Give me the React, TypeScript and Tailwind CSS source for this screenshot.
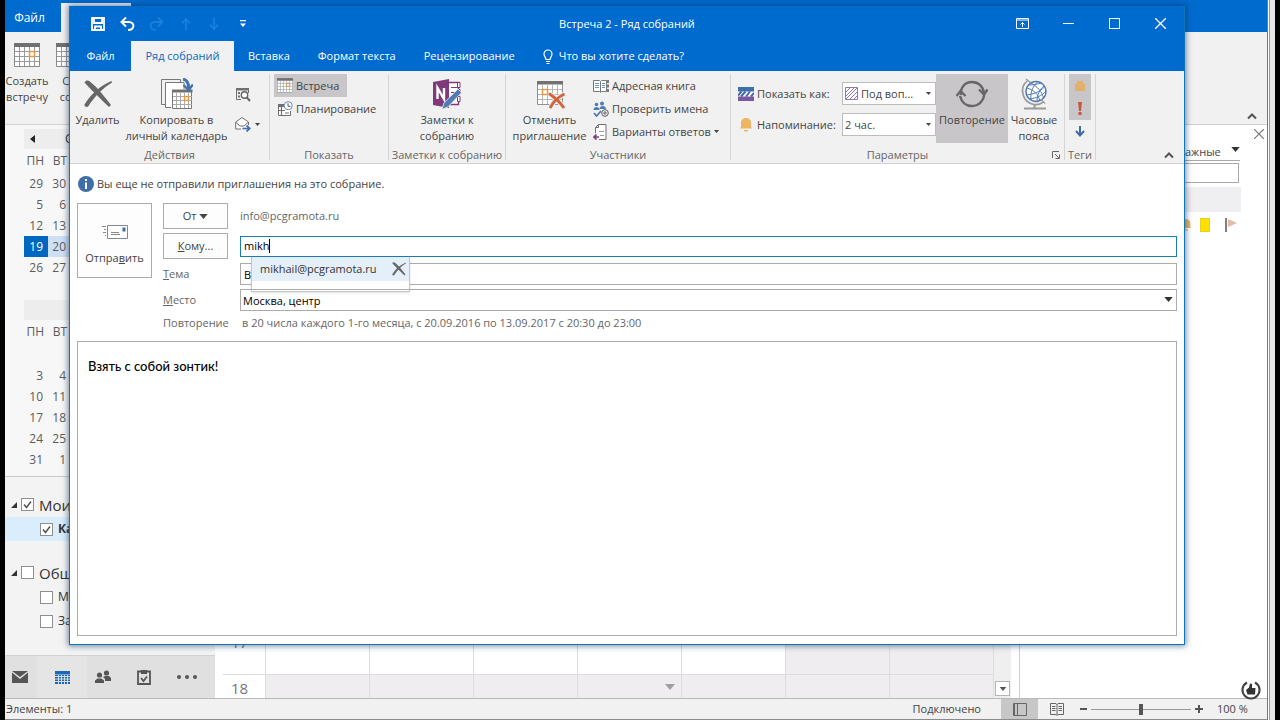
import type { ReactNode } from 'react'

interface MonthGridProps {
  title: string
  hasPrev?: boolean
  weeks: string[][]
}

const FIRST_MONTH = [['29', '30'], ['5', '6'], ['12', '13'], ['19', '20'], ['26', '27']]
const SECOND_MONTH = [['', ''], ['3', '4'], ['10', '11'], ['17', '18'], ['24', '25'], ['31', '1']]
const TABS = ['Вставка', 'Формат текста', 'Рецензирование']

/* ── Icons ───────────────────────── */

function CalendarIcon({ className = 'w-6 h-6' }: { className?: string }) {
  return (
    <svg viewBox="0 0 26 24" className={className} fill="none" aria-hidden="true">
      <path d="M0.5 3.5h25v20h-25z" fill="#fff" stroke="#8a8a8a" />
      <path d="M0 0h26v4H0z" fill="#717171" />
      <path d="M5.5 4v19M10.5 4v19M15.5 4v19M20.5 4v19M1 8.5h24M1 13.5h24M1 18.5h24" stroke="#9a9a9a" />
      <path d="M15.5 8.5h5v5h-5z" stroke="#e39b4a" strokeWidth="1.5" />
    </svg>
  )
}

function DeleteIcon({ className = 'w-8 h-8' }: { className?: string }) {
  return (
    <svg viewBox="0 0 32 32" className={className} fill="#666" aria-hidden="true">
      <path d="M2.5 4.5C4 1.5 7 2 9 4.5C16 10 22 18 29 27L27 29C19 21 11 14 2.5 4.5Z" />
      <path d="M29.5 3L30 4.5C21 10 13 18 6.5 28C5 30 2 28.500 2.500 26.500C9 16 18 8 29.500 3Z" />
    </svg>
  )
}

function CopyCalendarIcon() {
  return (
    <svg viewBox="0 0 32 32" className="w-8 h-8" fill="none" aria-hidden="true">
      <path d="M4 26.500H.5V1.500H19.500V4" stroke="#777" />
      <path d="M10 29.500H4.500V4.500H23V11" fill="#fff" stroke="#777" />
      <path d="M11.500 13.500h19v17h-19z" fill="#fff" stroke="#777" />
      <path d="M11 11.500h20.500v3H11z" fill="#717171" />
      <path d="M15.500 15v15M19.500 15v15M23.500 15v15M27.500 15v15M12 18.500h19M12 22.500h19M12 26.500h19" stroke="#aaa" />
      <path d="M23.500 18.500h4v4h-4z" stroke="#e39b4a" strokeWidth="1.500" />
      <path d="M22 1C26 2 28 5 27.500 11" stroke="#4472b0" strokeWidth="3" />
      <path d="M22.500 7l5 5L32 6.500" stroke="#4472b0" strokeWidth="2.400" />
    </svg>
  )
}

function CalendarSearchIcon() {
  return (
    <svg viewBox="0 0 16 16" className="w-4 h-4" fill="none" aria-hidden="true">
      <path d="M6 13.500H1.500V2.500h12V7" stroke="#707070" />
      <path d="M1 2h13v2.500H1zM3 6h2v2H3zM3 9.500h2v2H3z" fill="#707070" />
      <circle cx="9.500" cy="9" r="3.200" fill="#fff" stroke="#666" strokeWidth="1.400" />
      <path d="M11.800 11.300L15 15" stroke="#666" strokeWidth="2" />
    </svg>
  )
}

function ForwardIcon() {
  return (
    <svg viewBox="0 0 16 16" className="w-4 h-4" fill="none" aria-hidden="true">
      <path d="M6 13H.7V6L7 1.500 13.500 6v3" fill="#fff" stroke="#707070" />
      <path d="M1 6.500l4 3.500h4l4-3.500" stroke="#707070" />
      <path d="M7.500 12.500h6M11.500 9.500l3.300 3-3.300 3" stroke="#3f70b5" strokeWidth="1.700" />
    </svg>
  )
}

function PlanningIcon() {
  return (
    <svg viewBox="0 0 16 16" className="w-4 h-4" fill="none" aria-hidden="true">
      <path d="M7 4.500H1.500v10h12V10" fill="#fff" stroke="#707070" />
      <path d="M1 3h6v3H1z" fill="#707070" />
      <path d="M1 9.500h7M4.500 6v8M8 12h4" stroke="#707070" strokeWidth="1.200" />
      <circle cx="11.200" cy="4.700" r="4" fill="#fff" stroke="#6e87b8" />
      <path d="M11 2.300v3h2.500" stroke="#555" />
    </svg>
  )
}

function OneNoteIcon() {
  return (
    <svg viewBox="0 0 32 32" className="w-8 h-8" fill="none" aria-hidden="true">
      <path d="M17 4.500h10.500v22H17" fill="#fff" stroke="#80397b" strokeWidth="1.400" />
      <path d="M20 9.500h8M20 14.500h8M20 19.500h8" stroke="#80397b" />
      <path d="M26.500 4.500h2.500v5h-2.500zM26.500 11.500h2.500v5h-2.500zM26.500 18.500h2.500v5h-2.500z" fill="#fff" stroke="#80397b" />
      <path d="M2 4L18 1v29L2 27z" fill="#80397b" />
      <path d="M6.500 21V10l6.500 11V10" stroke="#fff" strokeWidth="2.400" />
      <path d="M11 31.500l1.800-6.500L27 11l3.500 3.500L17.500 28.500z" fill="#4f7cb5" stroke="#f0f0f0" strokeWidth=".8" />
    </svg>
  )
}

function CancelInviteIcon() {
  return (
    <svg viewBox="0 0 32 32" className="w-8 h-8" fill="none" aria-hidden="true">
      <path d="M3.500 4.500h25v22h-25z" fill="#fff" stroke="#909090" />
      <path d="M3 3h26v3.500H3z" fill="#717171" />
      <path d="M8.500 6v20M13.500 6v20M18.500 6v20M23.500 6v20M4 11.500h24M4 16.500h24M4 21.500h24" stroke="#b5b5b5" />
      <path d="M8.500 11.500h5v5h-5z" stroke="#e39b4a" strokeWidth="1.500" />
      <path d="M15 15.500C20 19 26 24 30 30M30.500 16C24 19 19 24 16 30" stroke="#f0f0f0" strokeWidth="5" />
      <path d="M15 15.500C20 19 26 24 30 30M30.500 16C24 19 19 24 16 30" stroke="#d5623a" strokeWidth="2.800" />
    </svg>
  )
}

function AddressBookIcon() {
  return (
    <svg viewBox="0 0 16 16" className="w-4 h-4" fill="none" aria-hidden="true">
      <path d="M.5 2.500h6l1 1 1-1h5v11h-5l-1 1-1-1h-6zM7.500 3.500V14" fill="#fff" stroke="#777" />
      <path d="M2 5.500h4M2 7.500h4M2 9.500h4M9 5.500h3M9 7.500h3M9 9.500h3" stroke="#6c94c4" />
      <path d="M15 2v3M15 6.500v3M15 11v3" stroke="#555" strokeWidth="1.500" />
    </svg>
  )
}

function CheckNamesIcon() {
  return (
    <svg viewBox="0 0 16 16" className="w-4 h-4" fill="none" aria-hidden="true">
      <circle cx="3.500" cy="3.500" r="1.800" fill="#4f7cb5" />
      <circle cx="9" cy="2.500" r="2" fill="#4f7cb5" />
      <path d="M.5 9c0-4 6-4 6 0zM6.500 8c0-4 6.500-4 6.500 0z" fill="#4f7cb5" />
      <path d="M1 12l2.500 3L8 10" stroke="#4f7cb5" strokeWidth="1.800" />
      <circle cx="12" cy="12" r="3.300" fill="#fff" stroke="#555" />
      <circle cx="12" cy="12" r="1.200" stroke="#555" />
    </svg>
  )
}

function ResponseIcon() {
  return (
    <svg viewBox="0 0 16 16" className="w-4 h-4" fill="none" aria-hidden="true">
      <path d="M2.500 9V3.500L5.500.5h7.500v15H6M2.500 3.500h3v-3" fill="#fff" stroke="#707070" />
      <path d="M6 7.500h5M7 11.500h4" stroke="#999" />
      <path d="M6 13H1M3.500 10.500L1 13l2.500 2.500" stroke="#80397b" strokeWidth="1.600" />
    </svg>
  )
}

function ShowAsIcon() {
  return (
    <svg viewBox="0 0 16 16" className="w-4 h-4" aria-hidden="true">
      <path d="M0 1h16v5H0z" fill="#3f6ea8" />
      <path d="M0 10h16v5H0z" fill="#7b57a0" />
      <path d="M0 5.500h16v5H0z" fill="#fff" />
      <path d="M0 9.500L3.500 5.500M3 10.500L7.500 5.500M8 10.500L12 5.500M13 10.500L16 7" stroke="#4668a8" strokeWidth="2" />
    </svg>
  )
}

function BellIcon({ className = 'w-4 h-4' }: { className?: string }) {
  return (
    <svg viewBox="0 0 16 16" className={className} fill="#edb562" aria-hidden="true">
      <path d="M8 1c3.500 0 5 2.500 5 5v4l1 1.500H2L3 10V6c0-2.500 1.500-5 5-5zM6 13h4v1.500H6z" />
    </svg>
  )
}

function RecurrenceIcon() {
  return (
    <svg viewBox="0 0 32 32" className="w-8 h-8" fill="none" stroke="#666" strokeWidth="2.400" aria-hidden="true">
      <path d="M5 17C4 9.500 9 4 16 4c6 0 11 4 12 11" />
      <path d="M28 14c1 8-5 14-12 14-6 0-10.500-4-12-10" />
      <path d="M23 11.500l5 5 3.500-5M.5 18L4.500 13l5 5" />
    </svg>
  )
}

function GlobeIcon() {
  return (
    <svg viewBox="0 0 32 32" className="w-8 h-8" fill="none" aria-hidden="true">
      <circle cx="18" cy="13.500" r="10" fill="#fff" stroke="#4f7cb5" strokeWidth="1.400" />
      <path d="M13 5c7 4 11 9 12.500 15M9 10c7 2 11 6 13 13M8.500 17c7-1 13-3 18-8M11.500 21c7-1 12-3 16.500-8M11 7c5 0 9-1 12-2M20 3.500c-5 4-8 11-7 18M26 8c-4 3-7 9-7 15" stroke="#4f7cb5" />
      <path d="M9 3C1 10 4 24 16 26.500c4 .5 7-.5 9-2.500" stroke="#999" strokeWidth="1.600" />
      <path d="M8 1l5 4M23 21.500l4 4" stroke="#999" strokeWidth="1.400" />
      <path d="M16.500 26.500v4M6 30.500h22" stroke="#999" strokeWidth="2" />
    </svg>
  )
}

function SendIcon() {
  return (
    <svg viewBox="0 0 28 16" className="w-7 h-4" fill="none" aria-hidden="true">
      <path d="M6.500 1.500h20v13h-20z" fill="#fff" stroke="#7c8a9c" />
      <path d="M21.500 3.500h3v4h-3z" fill="#3f6ea8" />
      <path d="M10 8.500h8M10 10.500h9M1 2.500h4M3 5.500h2M2 8.500h3M4 11.500h1" stroke="#888" />
    </svg>
  )
}

function Caret({ className }: { className: string }) {
  return (
    <svg viewBox="0 0 10 6" className={className} fill="currentColor" aria-hidden="true">
      <path d="M0 0h10L5 6z" />
    </svg>
  )
}

function ChevronUp() {
  return (
    <svg viewBox="0 0 10 8" className="w-[10px] h-2" fill="none" stroke="#555" strokeWidth="2" aria-hidden="true">
      <path d="M1 6.500l4-4 4 4" />
    </svg>
  )
}

/* ── Outlook main window ───────────────────────── */

function MonthGrid({ title, hasPrev, weeks }: MonthGridProps) {
  return (
    <div className="pl-[19px] text-xs text-[#5c5c5c]">
      <div className="h-5 bg-[#ededee] flex items-center pl-[6px] text-[#333]">
        {hasPrev && (
          <button type="button" aria-label="Назад">
            <svg viewBox="0 0 5 8" className="w-[5px] h-2" fill="#222"><path d="M5 0v8L0 4z" /></svg>
          </button>
        )}
        <span className="ml-[30px]">{title}</span>
      </div>
      <table className="table-fixed w-[47px] border-collapse text-right">
        <thead>
          <tr className="h-6">
            <th className="w-6 p-0 pr-1 font-normal">ПН</th>
            <th className="w-[23px] p-0 pr-1 font-normal">ВТ</th>
          </tr>
        </thead>
        <tbody>
          {weeks.map((week, i) => (
            <tr key={i} className="h-[21px]">
              {week.map((day, j) => (
                <td
                  key={j}
                  className={
                    day === '19'
                      ? 'p-0 pr-[5px] bg-[#0067c0] text-white'
                      : day === '20'
                        ? 'p-0 pr-[5px] bg-[#cfe0f5]'
                        : 'p-0 pr-[5px]'
                  }
                >
                  {day}
                </td>
              ))}
            </tr>
          ))}
        </tbody>
      </table>
    </div>
  )
}

function Tick({ checked, label, className }: { checked?: boolean; label: string; className: string }) {
  return (
    <label className={className}>
      <span className="relative w-[13px] h-[13px] shrink-0">
        <input
          type="checkbox"
          defaultChecked={checked}
          className="peer block appearance-none w-[13px] h-[13px] border border-[#8f8f8f] bg-white"
        />
        <svg viewBox="0 0 13 13" className="absolute inset-0 hidden peer-checked:block" fill="none" stroke="#555" strokeWidth="1.500">
          <path d="M3 6.500l2.500 3L10 3.500" />
        </svg>
      </span>
      {label}
    </label>
  )
}

function Disclosure() {
  return <svg viewBox="0 0 6 6" className="w-[6px] h-[6px] shrink-0" fill="#333"><path d="M6 0v6H0z" /></svg>
}

function Sidebar() {
  return (
    <aside className="w-[210px] shrink-0 flex flex-col bg-[#f3f3f3] overflow-hidden">
      <div className="pt-1 bg-[#f7f7f7] flex flex-col gap-[22px] h-[352px] border-b border-[#c9c9c9] shrink-0">
        <MonthGrid title="С" hasPrev weeks={FIRST_MONTH} />
        <MonthGrid title="" weeks={SECOND_MONTH} />
      </div>
      <div className="flex-1 pt-4 text-xs text-[#333]">
        <div className="h-6 flex items-center gap-1 pl-[6px]">
          <Disclosure />
          <Tick checked label="Мои" className="flex items-center gap-[5px] text-[15px]" />
        </div>
        <Tick checked label="Ка" className="h-6 flex items-center gap-[5px] pl-[35px] bg-[#d9edfd] font-bold" />
        <div className="mt-5 h-6 flex items-center gap-1 pl-[6px]">
          <Disclosure />
          <Tick label="Общ" className="flex items-center gap-[5px] text-[15px]" />
        </div>
        <Tick label="М" className="h-6 flex items-center gap-[5px] pl-[35px]" />
        <Tick label="За" className="h-6 flex items-center gap-[5px] pl-[35px]" />
      </div>
      <nav className="h-[43px] shrink-0 bg-[#e1e0e1] border-t border-[#d2d2d2] flex items-center text-[#555]">
        <button type="button" aria-label="Почта" className="w-8 flex pl-[7px]">
          <svg viewBox="0 0 16 12" className="w-4 h-3" fill="#555"><path d="M0 0h16L8 6zM0 1.500L8 8l8-6.500V12H0z" /></svg>
        </button>
        <button type="button" aria-label="Календарь" className="w-[50px] h-full bg-[#e6e5e6] flex items-center justify-center">
          <svg viewBox="0 0 15 13" className="w-[15px] h-[13px]" fill="#1d68b5">
            <path d="M0 0h15v3H0z" />
            <path d="M0 3.500h15V13H0z" />
            <path d="M0 5.500h15M0 8h15M0 10.500h15M3.500 4v9M6.500 4v9M9.500 4v9M12.500 4v9" stroke="#e6e5e6" strokeWidth=".9" />
          </svg>
        </button>
        <button type="button" aria-label="Люди" className="w-8 flex justify-center">
          <svg viewBox="0 0 16 14" className="w-4 h-[14px]" fill="#555">
            <circle cx="4.500" cy="5" r="2.600" />
            <circle cx="11.500" cy="3" r="2.600" />
            <path d="M0 13V10.500L2.500 8.500h4L9 10.500V13zM10 11V9L8 7l2-1h4l2 2v3z" />
          </svg>
        </button>
        <button type="button" aria-label="Задачи" className="w-[50px] flex justify-center">
          <svg viewBox="0 0 14 16" className="w-[14px] h-4" fill="none" stroke="#555" strokeWidth="1.800">
            <path d="M4 2.500H1V15h12V2.500h-3" />
            <path d="M4 1h6v4H4z" fill="#555" stroke="none" />
            <path d="M4 9l2.500 3L10 7.500" />
          </svg>
        </button>
        <button type="button" aria-label="Еще" className="w-9 flex justify-center">
          <svg viewBox="0 0 20 4" className="w-5 h-1" fill="#555"><circle cx="2" cy="2" r="2" /><circle cx="10" cy="2" r="2" /><circle cx="18" cy="2" r="2" /></svg>
        </button>
      </nav>
    </aside>
  )
}

function CalendarGrid() {
  return (
    <main className="flex-1 bg-white flex flex-col justify-end pl-2">
      <div className="flex">
        <div className="flex-1">
          {['17', '18'].map((hour) => (
            <div key={hour} className={hour === '17' ? 'h-[46px] flex border-b border-[#dcdcdc]' : 'h-[23px] flex'}>
              <span className="w-[43px] shrink-0 border-r border-[#dcdcdc] pl-2 text-[15px] leading-[26px] text-[#777]">{hour}</span>
              <div className="flex-1 grid grid-cols-7">
                {[0, 1, 2, 3, 4, 5, 6].map((day) => (
                  <div
                    key={day}
                    className={
                      hour === '17' && day < 5
                        ? 'border-r border-[#dcdcdc]'
                        : 'flex items-center justify-end border-r border-[#dcdcdc] bg-[#efedf0] pr-[6px]'
                    }
                  >
                    {hour === '18' && day === 3 && <Caret className="w-[10px] h-[6px] text-[#a0a0a0]" />}
                  </div>
                ))}
              </div>
            </div>
          ))}
        </div>
        <div className="w-[17px] bg-[#f0eff0] flex flex-col justify-end pb-[2px]">
          <button type="button" aria-label="Вниз" className="ml-px h-[15px] w-[15px] bg-white border border-[#b5b5b5] flex items-center justify-center">
            <Caret className="w-2 h-1 text-[#555]" />
          </button>
        </div>
        <div className="w-[9px] border-r border-[#cfcfcf]" />
      </div>
    </main>
  )
}

function TasksPane() {
  return (
    <aside className="w-[247px] shrink-0 bg-white flex flex-col items-end text-[#444]">
      <button type="button" aria-label="Закрыть" className="mr-[3px] mt-1">
        <svg viewBox="0 0 10 10" className="w-[10px] h-[10px]" stroke="#777" strokeWidth="1.200"><path d="M0 0l10 10M10 0L0 10" /></svg>
      </button>
      <div className="mr-[27px] w-[55px] h-[22px] border-b border-[#aaa] flex items-center justify-between">
        <span className="pt-1">ажные</span>
        <Caret className="w-[9px] h-[5px] text-[#333]" />
      </div>
      <input type="text" aria-label="Новая задача" className="mr-[28px] mt-[2px] w-[150px] h-5 border border-[#ababab] bg-white" />
      <div className="mr-[26px] mt-1 w-[150px] h-[25px] bg-[#efeef0]" />
      <div className="mr-[30px] mt-[6px] flex items-center gap-[7px]">
        <BellIcon className="w-[14px] h-[14px]" />
        <span className="w-[10px] h-[14px] bg-[#ffe000] border border-[#e8cf20]" />
        <svg viewBox="0 0 12 14" className="ml-2 w-3 h-[14px]"><path d="M1 0v14" stroke="#555" strokeWidth="1.500" /><path d="M3 1l9 4-9 4z" fill="#e3b9a8" /></svg>
      </div>
    </aside>
  )
}

function StatusBar() {
  return (
    <footer className="h-[22px] shrink-0 bg-[#f1f1f1] border-t border-b border-t-[#b9b9b9] border-b-[#8a8a8a] flex items-center text-[#444]">
      <span className="pl-px">Элементы: 1</span>
      <span className="ml-auto mr-5">Подключено</span>
      <button type="button" aria-label="Обычный" className="h-full w-[37px] bg-[#c8c7c8] flex items-center justify-center">
        <svg viewBox="0 0 14 13" className="w-[14px] h-[13px]" fill="none" stroke="#666"><path d="M.5.5h13v12H.5zM4.500 1v11M1.500.5v12" /></svg>
      </button>
      <button type="button" aria-label="Чтение" className="w-[37px] flex items-center justify-center">
        <svg viewBox="0 0 14 13" className="w-[14px] h-[13px]" fill="none" stroke="#666"><path d="M.5.5H6l1 1 1-1h5.500v11H8l-1 1-1-1H.5zM7 1v11M2 3.500h3.500M2 5.500h3.500M2 7.500h3.500M8.500 3.500H12M8.500 5.500H12M8.500 7.500H12" /></svg>
      </button>
      <button type="button" aria-label="Уменьшить" className="ml-[5px] w-[7px] h-[2px] bg-[#555]" />
      <label className="ml-1 w-[100px] flex" aria-label="Масштаб">
        <input
          type="range"
          defaultValue={50}
          className="w-full h-3 appearance-none bg-[linear-gradient(#999,#999)] bg-[length:100%_1px] bg-center bg-no-repeat [&::-webkit-slider-thumb]:appearance-none [&::-webkit-slider-thumb]:w-1 [&::-webkit-slider-thumb]:h-[11px] [&::-webkit-slider-thumb]:bg-[#555]"
        />
      </label>
      <button type="button" aria-label="Увеличить" className="ml-1">
        <svg viewBox="0 0 8 8" className="w-2 h-2" stroke="#555" strokeWidth="2"><path d="M4 0v8M0 4h8" /></svg>
      </button>
      <span className="w-11 ml-[14px] mr-[6px]">100 %</span>
    </footer>
  )
}

function OutlookWindow() {
  return (
    <div className="flex-1 min-w-0 flex flex-col bg-white">
      <header className="h-8 shrink-0 bg-[#006bcf] flex">
        <button type="button" className="w-14 pr-[7px] text-xs text-white pt-1">Файл</button>
        <div className="w-[70px] mt-[3px] bg-[#f1f1f1]" />
      </header>
      <div className="h-[93px] shrink-0 bg-[#f1f1f1] border-b border-[#d0d0d0] flex items-start pt-[11px] text-center text-[#444]">
        <button type="button" className="w-11 flex flex-col items-center gap-[6px] leading-4">
          <CalendarIcon className="w-[26px] h-6" />
          Создать встречу
        </button>
        <button type="button" className="ml-1 w-8 flex flex-col items-center gap-[6px] leading-4">
          <CalendarIcon className="w-[26px] h-6" />
          <span>Со<br />соб</span>
        </button>
        <button type="button" aria-label="Свернуть ленту" className="ml-auto self-end mr-[10px] mb-1">
          <ChevronUp />
        </button>
      </div>
      <div className="flex-1 min-h-0 flex">
        <Sidebar />
        <CalendarGrid />
        <TasksPane />
      </div>
      <StatusBar />
    </div>
  )
}

/* ── Meeting window ───────────────────────── */

function RibbonGroup({ label, className, children }: { label: string; className: string; children: ReactNode }) {
  return (
    <section className={className}>
      <div className="h-[75px] flex">{children}</div>
      <div className="h-[11px] leading-[11px] text-center text-[#666] whitespace-nowrap">{label}</div>
    </section>
  )
}

function BigButton({ icon, className, children }: { icon: ReactNode; className: string; children: ReactNode }) {
  return (
    <button type="button" className={className}>
      {icon}
      <span className="mt-[2px] leading-4">{children}</span>
    </button>
  )
}

function Ribbon() {
  return (
    <div className="h-[93px] shrink-0 bg-[#f1f1f1] border-b border-[#d0d0d0] pt-[3px] flex text-[#444]">
      <RibbonGroup label="Действия" className="w-[200px] h-[86px] border-r border-[#d5d5d5]">
        <BigButton icon={<DeleteIcon />} className="w-[55px] pt-1 flex flex-col items-center">Удалить</BigButton>
        <BigButton icon={<CopyCalendarIcon />} className="w-[103px] pt-1 flex flex-col items-center whitespace-nowrap">
          Копировать в<br />личный календарь
        </BigButton>
        <div className="pl-[7px] pt-3 flex flex-col gap-[14px]">
          <button type="button" aria-label="Календарь"><CalendarSearchIcon /></button>
          <button type="button" aria-label="Переслать" className="flex items-center gap-1">
            <ForwardIcon />
            <Caret className="w-[5px] h-[3px]" />
          </button>
        </div>
      </RibbonGroup>

      <RibbonGroup label="Показать" className="w-[119px] h-[86px] border-r border-[#d5d5d5]">
        <div className="pl-1 flex flex-col items-start">
          <button type="button" className="h-[23px] w-[73px] bg-[#c8c6c8] flex items-center gap-[3px] pl-[3px]">
            <CalendarIcon className="w-4 h-[15px] shrink-0" />
            Встреча
          </button>
          <button type="button" className="h-[23px] flex items-center gap-[3px] pl-[3px]">
            <PlanningIcon />
            Планирование
          </button>
        </div>
      </RibbonGroup>

      <RibbonGroup label="Заметки к собранию" className="w-[117px] h-[86px] border-r border-[#d5d5d5]">
        <BigButton icon={<OneNoteIcon />} className="w-full pt-1 flex flex-col items-center">
          Заметки к<br />собранию
        </BigButton>
      </RibbonGroup>

      <RibbonGroup label="Участники" className="w-[225px] h-[86px] border-r border-[#d5d5d5]">
        <BigButton icon={<CancelInviteIcon />} className="w-[87px] pt-1 flex flex-col items-center">
          Отменить<br />приглашение
        </BigButton>
        <div className="flex flex-col items-start">
          <button type="button" className="h-[23px] flex items-center gap-[3px]"><AddressBookIcon />Адресная книга</button>
          <button type="button" className="h-[23px] flex items-center gap-[3px]"><CheckNamesIcon />Проверить имена</button>
          <button type="button" className="h-[23px] flex items-center gap-[3px] whitespace-nowrap">
            <ResponseIcon />
            Варианты ответов
            <Caret className="w-[5px] h-[3px]" />
          </button>
        </div>
      </RibbonGroup>

      <RibbonGroup label="Параметры" className="relative w-[334px] h-[86px] border-r border-[#d5d5d5]">
        <div className="w-[205px] pl-[7px] pt-2 flex flex-col gap-2">
          <div className="h-[23px] flex items-center gap-[3px]">
            <ShowAsIcon />
            <label htmlFor="show-as" className="w-[82px] whitespace-nowrap">Показать как:</label>
            <div className="relative flex-1 h-full">
              <select id="show-as" className="appearance-none w-full h-full border border-[#bcbcbc] bg-white pl-[18px]">
                <option>Под воп...</option>
              </select>
              <svg viewBox="0 0 13 13" className="absolute left-[3px] top-[5px] w-[13px] h-[13px] pointer-events-none" fill="none" stroke="#9079bb">
                <path d="M.5.5h12v12H.5zM1 5l4-4M1 9l8-8M1 12L12 1M5 12l7-7M9 12l3-3" />
              </svg>
              <Caret className="absolute right-[5px] top-[10px] w-[5px] h-[3px] pointer-events-none" />
            </div>
          </div>
          <div className="h-[23px] flex items-center gap-[3px]">
            <BellIcon />
            <label htmlFor="reminder" className="w-[82px] whitespace-nowrap">Напоминание:</label>
            <div className="relative flex-1 h-full">
              <select id="reminder" className="appearance-none w-full h-full border border-[#bcbcbc] bg-white pl-[2px]">
                <option>2 час.</option>
              </select>
              <Caret className="absolute right-[5px] top-[10px] w-[5px] h-[3px] pointer-events-none" />
            </div>
          </div>
        </div>
        <BigButton icon={<RecurrenceIcon />} className="w-[72px] h-[69px] pt-1 bg-[#c8c6c8] flex flex-col items-center">
          Повторение
        </BigButton>
        <BigButton icon={<GlobeIcon />} className="w-[52px] pt-1 flex flex-col items-center">
          Часовые<br />пояса
        </BigButton>
        <button type="button" aria-label="Параметры" className="absolute right-1 bottom-[1px]">
          <svg viewBox="0 0 8 8" className="w-2 h-2" fill="none" stroke="#666"><path d="M.5 7V.5H7M3 3l4 4M7.500 3.500v4h-4" /></svg>
        </button>
      </RibbonGroup>

      <RibbonGroup label="Теги" className="w-[31px] h-[86px] border-r border-[#d5d5d5]">
        <div className="pl-1 flex flex-col">
          <button type="button" aria-label="Частное" className="w-[22px] h-[23px] bg-[#c8c6c8] flex items-center justify-center">
            <svg viewBox="0 0 12 12" className="w-3 h-3" fill="#e3b16c"><path d="M1 4l2-1V1h6v2l2 1v7H1z" /></svg>
          </button>
          <button type="button" aria-label="Высокая важность" className="w-[22px] h-[23px] bg-[#c8c6c8] flex items-center justify-center">
            <svg viewBox="0 0 4 13" className="w-1 h-[13px]" fill="#c9563c"><path d="M0 0h4L3 9H1zM.5 10h3v3h-3z" /></svg>
          </button>
          <button type="button" aria-label="Низкая важность" className="w-[22px] h-[23px] flex items-center justify-center">
            <svg viewBox="0 0 10 11" className="w-[10px] h-[11px]" fill="none" stroke="#3f6ea8" strokeWidth="2"><path d="M5 0v9M1 5l4 4.500L9 5" /></svg>
          </button>
        </div>
      </RibbonGroup>

      <button type="button" aria-label="Свернуть ленту" className="ml-auto self-end mr-[10px] mb-1">
        <ChevronUp />
      </button>
    </div>
  )
}

function TitleBar() {
  return (
    <div className="h-[35px] shrink-0 flex items-center text-white relative">
      <div className="flex items-center pl-[21px]">
        <button type="button" aria-label="Сохранить">
          <svg viewBox="0 0 14 14" className="w-[14px] h-[14px]" fill="none" stroke="#fff" strokeWidth="1.800"><path d="M1 1h12v12H1zM3 1v5h8V1M4 13V9.500h6V13" /></svg>
        </button>
        <button type="button" aria-label="Отменить" className="ml-[15px]">
          <svg viewBox="0 0 15 14" className="w-[15px] h-[14px]" fill="none" stroke="#fff" strokeWidth="2"><path d="M6 .5L1.500 5 6 9.500M2 5h7c6 0 6 8-1 8" /></svg>
        </button>
        <button type="button" aria-label="Вернуть" className="ml-[14px]">
          <svg viewBox="0 0 15 14" className="w-[15px] h-[14px]" fill="none" stroke="#1a7fdd" strokeWidth="1.800"><path d="M9 .5L13.500 5 9 9.500M13 5H6c-6 0-6 8 1 8" /></svg>
        </button>
        <button type="button" aria-label="Предыдущий" className="ml-[17px]">
          <svg viewBox="0 0 10 12" className="w-[10px] h-3" fill="none" stroke="#1a7fdd" strokeWidth="1.800"><path d="M5 12V1M1 5.500L5 1l4 4.500" /></svg>
        </button>
        <button type="button" aria-label="Следующий" className="ml-[18px]">
          <svg viewBox="0 0 10 12" className="w-[10px] h-3" fill="none" stroke="#1a7fdd" strokeWidth="1.800"><path d="M5 0v11M1 6.500L5 11l4-4.500" /></svg>
        </button>
        <button type="button" aria-label="Настройка" className="ml-[21px]">
          <svg viewBox="0 0 6 7" className="w-[6px] h-[7px]" fill="#fff"><path d="M0 0h6v1.300H0zM0 3.500h6L3 7z" /></svg>
        </button>
      </div>
      <h1 className="absolute inset-x-0 text-center pointer-events-none">Встреча 2 - Ряд собраний</h1>
      <div className="ml-auto pr-[18px] flex items-center">
        <button type="button" aria-label="Параметры ленты">
          <svg viewBox="0 0 13 11" className="w-[13px] h-[11px]" fill="none" stroke="#fff"><path d="M.5.5h12v10H.5zM0 2h13M6.500 9V4.500M4.500 6.500l2-2 2 2" /></svg>
        </button>
        <button type="button" aria-label="Свернуть" className="ml-[34px] w-[11px] h-px bg-white" />
        <button type="button" aria-label="Развернуть" className="ml-[35px] w-[11px] h-[11px] border border-white" />
        <button type="button" aria-label="Закрыть" className="ml-[35px]">
          <svg viewBox="0 0 10 10" className="w-[11px] h-[11px]" stroke="#fff" strokeWidth="1.200"><path d="M0 0l10 10M10 0L0 10" /></svg>
        </button>
      </div>
    </div>
  )
}

function TabBar() {
  return (
    <nav className="h-[30px] shrink-0 flex text-white">
      <button type="button" className="w-[61px]">Файл</button>
      <button type="button" className="w-[103px] bg-[#f1f1f1] text-[#0b68bd]">Ряд собраний</button>
      <div className="flex gap-7 pl-[14px]">
        {TABS.map((tab) => (
          <button key={tab} type="button">{tab}</button>
        ))}
        <button type="button" className="flex items-center gap-[6px]">
          <svg viewBox="0 0 10 15" className="w-[10px] h-[15px]" fill="none" stroke="#fff" strokeWidth="1.200">
            <path d="M3 10.500C3 8.500 1 7.500 1 5a4 4 0 0 1 8 0c0 2.500-2 3.500-2 5.500zM3 12.500h4M3.500 14.500h3" />
          </svg>
          Что вы хотите сделать?
        </button>
      </div>
    </nav>
  )
}

function MeetingForm() {
  return (
    <form className="flex-1 min-h-0 flex flex-col bg-white px-[7px] pb-2 text-[#666]">
      <div className="h-[39px] shrink-0 flex items-center gap-[3px] pl-px text-[#444]">
        <svg viewBox="0 0 16 16" className="w-4 h-4" fill="#3f6fab">
          <circle cx="8" cy="8" r="8" />
          <path d="M7 6.500h2V13H7zM7 3h2v2H7z" fill="#fff" />
        </svg>
        Вы еще не отправили приглашения на это собрание.
      </div>
      <div className="flex gap-[11px] shrink-0">
        <button type="button" className="w-[75px] h-[75px] shrink-0 border border-[#ababab] bg-[#fdfdfd] flex flex-col items-center pt-5 gap-[10px] text-[#444]">
          <SendIcon />
          <span className="leading-4">Отпра<u>в</u>ить</span>
        </button>
        <div className="flex-1 grid grid-cols-[65px_1fr] gap-x-3 gap-y-1 items-center">
          <button type="button" className="h-[26px] border border-[#ababab] bg-[#fdfdfd] flex items-center justify-center gap-[3px] text-[#444]">
            От
            <Caret className="w-[9px] h-[5px]" />
          </button>
          <span>info@pcgramota.ru</span>

          <button type="button" className="h-[26px] border border-[#ababab] bg-[#fdfdfd] text-[#444]"><u>К</u>ому...</button>
          <div className="relative">
            <div className="h-[21px] border border-[#1a7bb9] bg-white flex items-center pl-[3px] text-black">
              <input type="text" aria-label="Кому" defaultValue="mikh" className="w-[25px] outline-none bg-transparent" />
              <span className="w-px h-[14px] bg-black" />
            </div>
            <div className="absolute left-[11px] top-[21px] w-[159px] h-[35px] bg-white border border-[#c6c6c6] border-t-0 shadow-sm">
              <div className="h-6 bg-[#e4effa] flex items-center justify-between pl-2 pr-[2px] text-[#333]">
                mikhail@pcgramota.ru
                <button type="button" aria-label="Удалить"><DeleteIcon className="w-4 h-4" /></button>
              </div>
            </div>
          </div>

          <label htmlFor="subject"><u>Т</u>ема</label>
          <input id="subject" type="text" defaultValue="В" className="h-[22px] border border-[#ababab] px-[3px] text-black" />

          <label htmlFor="place"><u>М</u>есто</label>
          <div className="relative flex">
            <input id="place" type="text" defaultValue="Москва, центр" className="flex-1 h-[22px] border border-[#ababab] px-[2px] text-black" />
            <button type="button" aria-label="Открыть список" className="absolute right-1 top-2 text-[#333]">
              <Caret className="w-[9px] h-[5px] block" />
            </button>
          </div>

          <span>Повторение</span>
          <span className="pl-[2px]">в 20 числа каждого 1-го месяца, с 20.09.2016 по 13.09.2017 с 20:30 до 23:00</span>
        </div>
      </div>
      <textarea
        aria-label="Текст приглашения"
        defaultValue="Взять с собой зонтик!"
        className="flex-1 min-h-0 mt-[10px] resize-none border border-[#ababab] px-[10px] py-[15px] font-['Lato','Open_Sans',sans-serif] text-[13px] leading-[18px] text-black"
      />
    </form>
  )
}

function MeetingWindow() {
  return (
    <div className="absolute left-[69px] right-[95px] top-[6px] bottom-[75px] flex flex-col border border-t-0 border-[#0d78b8] bg-[#006bcf] shadow-[0_0_6px_1px_rgba(0,40,80,0.55)] overflow-hidden">
      <TitleBar />
      <TabBar />
      <Ribbon />
      <MeetingForm />
    </div>
  )
}

export default function App() {
  return (
    <div className="relative h-screen bg-black pl-[5px] pr-[5px] flex overflow-hidden font-['Open_Sans','Noto_Sans',sans-serif] text-[11px] leading-4 font-medium">
      <OutlookWindow />
      <div className="w-2 border-l border-[#777] bg-[#e6e6e6] flex">
        <div className="w-[2px] border-r border-[#999] bg-white" />
      </div>
      <MeetingWindow />
      <svg viewBox="0 0 20 20" className="absolute right-[19px] bottom-5 w-5 h-5" fill="none">
        <circle cx="10" cy="10" r="9" fill="#fff" />
        <path d="M6 2.500A8.500 8.500 0 1 0 14 2.500" stroke="#444" strokeWidth="2.200" />
        <path d="M9 3.500l2 .5v4h3.500L14 14.500H6.500L5 10l3-2.500z" fill="#333" />
      </svg>
    </div>
  )
}
